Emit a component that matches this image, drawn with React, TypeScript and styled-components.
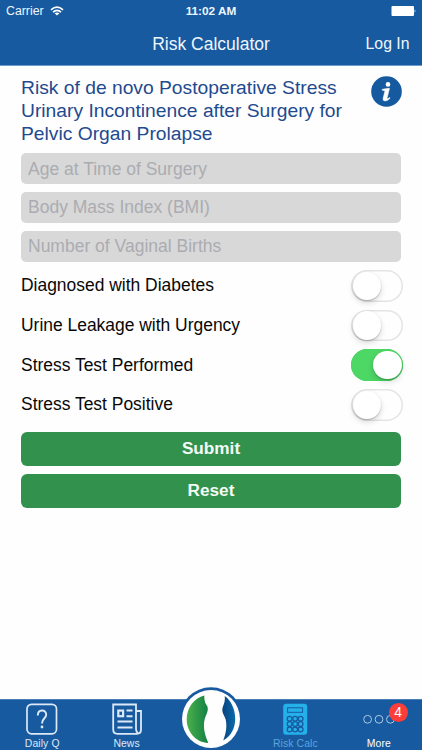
import React, { useState } from "react";
import styled, { createGlobalStyle } from "styled-components";

const BLUE = "#185aa0";

const GlobalStyle = createGlobalStyle`
  *, *::before, *::after { box-sizing: border-box; }
  body { margin: 0; background: #fff; }
  button, input { font: inherit; border: 0; margin: 0; padding: 0; }
`;

const Screen = styled.div`
  width: 422px;
  height: 750px;
  display: flex;
  flex-direction: column;
  background: #fefefe;
  font-family: "Liberation Sans", Arial, sans-serif;
  overflow: hidden;
`;

const Header = styled.header`
  height: 66px;
  flex: none;
  background: ${BLUE};
  border-bottom: 1px solid #6f9cc8;
  color: #eef6fd;
`;

const StatusBar = styled.div`
  height: 22px;
  display: grid;
  grid-template-columns: 1fr auto 1fr;
  align-items: center;
  padding: 0 6px 0 6px;
  font-size: 12.3px;
`;

const Carrier = styled.div`
  display: flex;
  align-items: center;
  gap: 6px;
`;

const Clock = styled.div`
  font-size: 11.8px;
  font-weight: 700;
`;

const BatteryIcon = styled.svg`
  justify-self: end;
  margin-right: -1px;
`;

const NavBar = styled.div`
  height: 44px;
  display: grid;
  grid-template-columns: 1fr auto 1fr;
  align-items: center;
  padding: 0 12.5px;
`;

const NavTitle = styled.h1`
  grid-column: 2;
  margin: 0;
  font-size: 17.5px;
  font-weight: 400;
`;

const NavButton = styled.button`
  justify-self: end;
  background: none;
  color: inherit;
  font-size: 15.8px;
`;

const Content = styled.main`
  flex: 1;
  padding: 10px 21px 0;
`;

const Intro = styled.div`
  display: flex;
  justify-content: space-between;
  align-items: flex-start;
  height: 77px;
`;

const Heading = styled.h2`
  margin: 0;
  color: #1f4a8f;
  font-size: 19.25px;
  line-height: 23px;
  font-weight: 400;
  white-space: nowrap;
`;

const InfoIcon = styled.svg`
  flex: none;
  margin: -0.5px -0.5px 0 0;
`;

const Fields = styled.div`
  display: flex;
  flex-direction: column;
  gap: 7.8px;
`;

const Field = styled.input`
  width: 100%;
  height: 31px;
  padding: 1px 7px 0;
  border-radius: 5px;
  background: #d8d8d8;
  font-size: 17.5px;
  &::placeholder { color: #abacb1; opacity: 1; }
`;

const Options = styled.div`
  display: flex;
  flex-direction: column;
  padding-top: 4.4px;
`;

const OptionRow = styled.div`
  height: 39.7px;
  display: flex;
  align-items: center;
  justify-content: space-between;
  margin-right: -2px;
  font-size: 17.45px;
  color: #080808;
`;

const Switch = styled.button<{ $on: boolean }>`
  width: 52px;
  height: 31.5px;
  flex: none;
  display: flex;
  align-items: center;
  justify-content: ${(p) => (p.$on ? "flex-end" : "flex-start")};
  border-radius: 16px;
  padding: 0 1.5px;
  background: ${(p) => (p.$on ? "#4dd765" : "#fefefe")};
  box-shadow: inset 0 0 0 1.5px ${(p) => (p.$on ? "#4dd765" : "#e4e4e4")};
`;

const Knob = styled.span`
  width: 28.5px;
  height: 28.5px;
  border-radius: 50%;
  background: #fff;
  box-shadow: 0 3px 6px rgba(0, 0, 0, 0.14), 0 1px 1.5px rgba(0, 0, 0, 0.22);
`;

const Actions = styled.div`
  display: flex;
  flex-direction: column;
  gap: 8px;
  padding-top: 7px;
`;

const ActionButton = styled.button`
  height: 34px;
  border-radius: 6px;
  background: #33914e;
  color: #f4fbf5;
  font-size: 17.2px;
  font-weight: 700;
`;

const TabBar = styled.nav`
  height: 51px;
  flex: none;
  display: grid;
  grid-template-columns: repeat(5, 1fr);
  background: ${BLUE};
  border-top: 1px solid #4a80b8;
`;

const Tab = styled.button<{ $color?: string }>`
  position: relative;
  display: flex;
  flex-direction: column;
  align-items: center;
  padding-top: 3px;
  background: none;
  color: ${(p) => p.$color ?? "#dce9f6"};
  font-size: 10.4px;
  line-height: 12px;
  letter-spacing: 0.1px;
`;

const MoreTab = styled(Tab)`
  padding-right: 2px;
`;

const TabIcon = styled.svg`
  display: block;
  width: 36px;
  height: 33px;
  flex: none;
  margin-bottom: 1.5px;
`;

const Badge = styled.span`
  position: absolute;
  left: 51px;
  top: 3px;
  width: 19px;
  height: 19px;
  border-radius: 50%;
  background: #fc3d39;
  color: #fff;
  font-size: 13.8px;
  line-height: 19px;
  text-align: center;
`;

const Logo = styled.svg`
  width: 66px;
  height: 66px;
  flex: none;
  margin-top: -17px;
`;

const optionNames = [
  "Diagnosed with Diabetes",
  "Urine Leakage with Urgency",
  "Stress Test Performed",
  "Stress Test Positive",
];

const keys = [0, 1, 2].flatMap((r) => [0, 1, 2].map((c) => [12.6 + c * 5.5, 15.8 + r * 5.3]));

export default function App() {
  const [checked, setChecked] = useState([false, false, true, false]);
  const toggle = (i: number) => setChecked(checked.map((v, n) => (n === i ? !v : v)));

  return (
    <Screen>
      <GlobalStyle />
      <Header>
        <StatusBar>
          <Carrier>
            Carrier
            <svg width="14" height="10" viewBox="0 0 14 10" fill="none" stroke="#fff" strokeWidth="1.7">
              <path d="M1 3.8Q7-1.4 13 3.8" />
              <path d="M3 6.1Q7 2.6 11 6.1" />
              <path d="M7 9.6L4.6 7.3Q7 5.7 9.4 7.3Z" fill="#fff" stroke="none" />
            </svg>
          </Carrier>
          <Clock>11:02 AM</Clock>
          <BatteryIcon width="26" height="10" viewBox="0 0 26 10" fill="#fff">
            <rect x="0.5" width="22.5" height="10" rx="1" />
            <path d="M23.7 3.2q1.6 1.8 0 3.6z" />
          </BatteryIcon>
        </StatusBar>
        <NavBar>
          <NavTitle>Risk Calculator</NavTitle>
          <NavButton>Log In</NavButton>
        </NavBar>
      </Header>

      <Content>
        <Intro>
          <Heading>
            Risk of de novo Postoperative Stress
            <br />
            Urinary Incontinence after Surgery for
            <br />
            Pelvic Organ Prolapse
          </Heading>
          <InfoIcon width="31" height="31" viewBox="0 0 31 31">
            <circle cx="15.5" cy="15.5" r="15.3" fill="#155a9f" />
            <circle cx="17" cy="8.4" r="2.3" fill="#fff" />
            <path
              d="M11.3 13.3Q14 12.6 18.5 12.3L16.2 21.8Q16 23 16.8 22.7L18.6 21.5L19.1 22.2Q16.8 25 14.2 25Q11.5 25 12.1 22.3L13.8 15.4Q14 14.3 11.2 14.3Z"
              fill="#fff"
              stroke="#fff"
              strokeWidth="0.5"
            />
          </InfoIcon>
        </Intro>

        <Fields>
          <Field placeholder="Age at Time of Surgery" />
          <Field placeholder="Body Mass Index (BMI)" />
          <Field placeholder="Number of Vaginal Births" />
        </Fields>

        <Options>
          {optionNames.map((name, i) => (
            <OptionRow key={name}>
              <span>{name}</span>
              <Switch $on={checked[i]} role="switch" aria-checked={checked[i]} onClick={() => toggle(i)}>
                <Knob />
              </Switch>
            </OptionRow>
          ))}
        </Options>

        <Actions>
          <ActionButton>Submit</ActionButton>
          <ActionButton>Reset</ActionButton>
        </Actions>
      </Content>

      <TabBar>
        <Tab>
          <TabIcon viewBox="0 0 36 33" fill="none" stroke="#dce9f6" strokeWidth="1.7">
            <rect x="3" y="1.3" width="29.5" height="29.5" rx="4.5" />
            <path d="M13.8 12.5C13.8 6 22.2 6 22.2 11.8C22.2 15.5 18 15.2 18 20.5" strokeWidth="1.9" />
            <circle cx="18" cy="24" r="1.4" fill="#dce9f6" stroke="none" />
          </TabIcon>
          Daily Q
        </Tab>
        <Tab>
          <TabIcon viewBox="0 0 36 33" fill="none" stroke="#dce9f6" strokeWidth="1.8">
            <path d="M27 26V1.5H4.2V26.5Q4.2 30.8 8.5 30.8H28Q32 30.8 32 26.8V8H27.5M27 26Q27 28.5 29 30.5" />
            <rect x="9.3" y="7.6" width="4.8" height="5.6" strokeWidth="2.2" />
            <path d="M17.5 7.6H23.5M17.5 13.2H23.5M8.5 18.6H23.5M8.5 24.4H23.5" strokeWidth="2" />
          </TabIcon>
          News
        </Tab>
        <Tab aria-label="Home">
          <Logo viewBox="0 0 66 66">
            <defs>
              <linearGradient id="leaf" x1="0" y1="0" x2="1" y2="0">
                <stop offset="0" stopColor="#4bb04a" />
                <stop offset="1" stopColor="#128045" />
              </linearGradient>
              <linearGradient id="wave" x1="0" y1="0" x2="1" y2="0">
                <stop offset="0" stopColor="#0a4280" />
                <stop offset="1" stopColor="#096bab" />
              </linearGradient>
            </defs>
            <circle cx="33" cy="33" r="31.7" fill={BLUE} />
            <circle cx="33" cy="33" r="29" fill="#fefefe" />
            <path
              d="M26.3 9.5C26.2 15.5 27.5 17.5 29.2 20C31 24.5 28.3 28 26.7 33C24.7 41 27 49.5 30.3 56.9C18 56.5 8.7 46 8.7 33.2C8.7 21.5 16.5 11.8 26.3 9.5Z"
              fill="url(#leaf)"
            />
            <path
              d="M46.7 10C47.4 15 45.8 18 44.5 22C43.5 27 46.5 29 47.8 34C49.2 41.5 47.8 47.5 45.2 54.5C52.7 50.5 57.2 42.5 57.2 33C57.2 23 53 14.5 46.7 10Z"
              fill="url(#wave)"
            />
          </Logo>
        </Tab>
        <Tab $color="#5aa5dd">
          <TabIcon viewBox="0 0 36 33">
            <rect x="6.2" y="0.8" width="24" height="31" rx="3" fill="#24b1ea" />
            <g fill="none" stroke={BLUE} strokeWidth="1">
              <rect x="10.6" y="4.8" width="15" height="4.5" />
              {keys.map(([x, y]) => (
                <circle key={`${x}-${y}`} cx={x} cy={y} r="2.4" strokeWidth="1.3" />
              ))}
            </g>
          </TabIcon>
          Risk Calc
        </Tab>
        <MoreTab $color="#ffffff">
          <TabIcon viewBox="0 0 36 33" fill="none" stroke="#a9c8e4" strokeWidth="1">
            <circle cx="6.6" cy="16.3" r="3.9" />
            <circle cx="18" cy="16.3" r="3.9" />
            <circle cx="29.4" cy="16.3" r="3.9" />
          </TabIcon>
          More
          <Badge>4</Badge>
        </MoreTab>
      </TabBar>
    </Screen>
  );
}
